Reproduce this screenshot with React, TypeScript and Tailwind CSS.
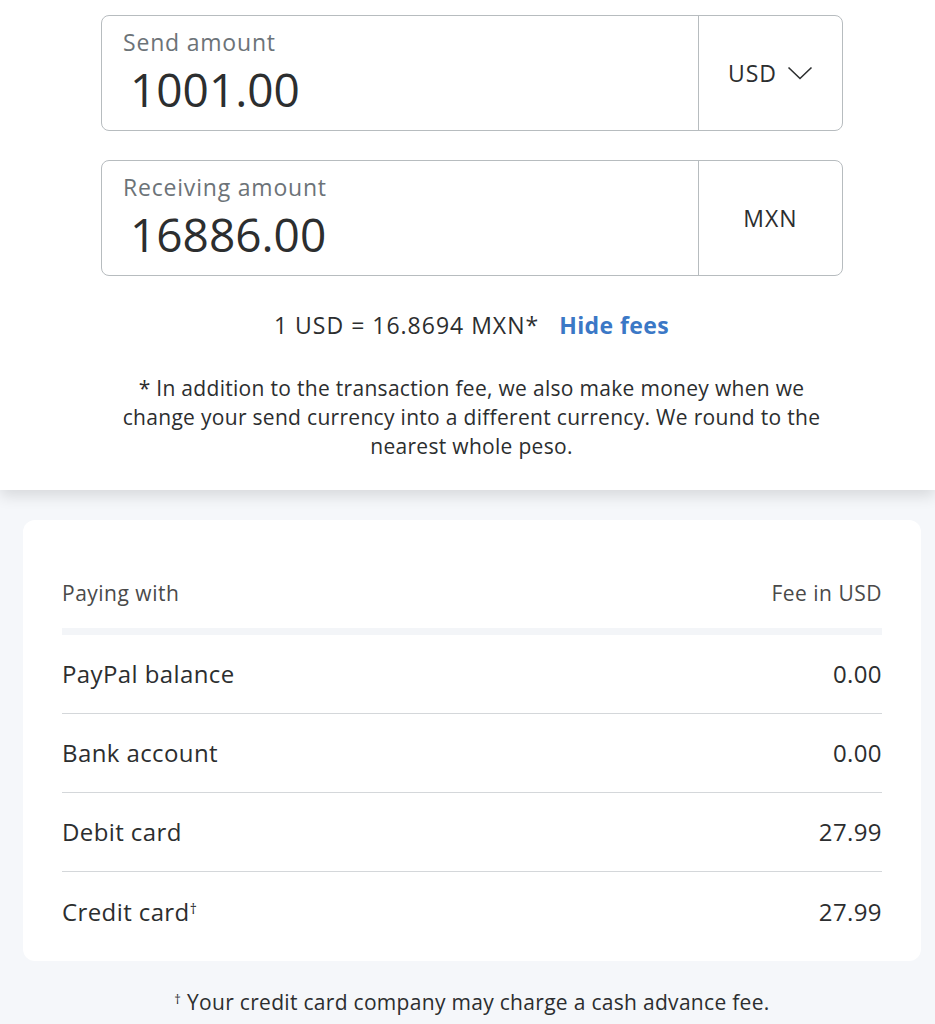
const rows = [
  { label: 'PayPal balance', fee: '0.00' },
  { label: 'Bank account', fee: '0.00' },
  { label: 'Debit card', fee: '27.99' },
  { label: 'Credit card', fee: '27.99', dagger: true },
]

function AmountBox({ label, value, currency, chevron }: { label: string; value: string; currency: string; chevron?: boolean }) {
  return (
    <div className="flex h-[116px] w-[742px] rounded-lg border border-[#b7bcbf] bg-white">
      <div className="flex flex-1 flex-col pl-[21px] pt-[11px]">
        <span className="text-[23px] leading-[31px] tracking-[0.8px] text-[#6c7378]">{label}</span>
        <span className="ml-[7px] text-[46px] leading-[63px] text-[#2c2e2f]">{value}</span>
      </div>
      <div className="flex w-[144px] items-center justify-center gap-[10px] border-l border-[#b7bcbf] text-[23px] tracking-[1px] text-[#2c2e2f]">
        <span>{currency}</span>
        {chevron && (
          <svg width="26" height="14" viewBox="0 0 26 14" fill="none" stroke="#2c2e2f" strokeWidth="1.6">
            <path d="M1.5 1.5l11.5 11 11.5-11" />
          </svg>
        )}
      </div>
    </div>
  )
}

export default function App() {
  return (
    <div className="min-h-screen bg-[#f5f7fa]" style={{ fontFamily: '"Open Sans", "Noto Sans", sans-serif' }}>
      <div className="bg-white pb-[29px] pt-[15px] shadow-[0_6px_14px_rgba(0,0,0,0.12)]">
        <div className="ml-[101px] flex flex-col gap-[29px]">
          <AmountBox label="Send amount" value="1001.00" currency="USD" chevron />
          <AmountBox label="Receiving amount" value="16886.00" currency="MXN" />
        </div>
        <div className="mt-[34px] flex items-center justify-center gap-[20px] pl-[8px] text-[23px] leading-[30px]">
          <span className="tracking-[1px] text-[#2c2e2f]">1 USD = 16.8694 MXN*</span>
          <span className="font-bold tracking-[0.4px] text-[#3b78c6]">Hide fees</span>
        </div>
        <p className="mx-auto mt-[34px] w-[712px] pl-[8px] text-center text-[21px] leading-[29px] tracking-[0.3px] text-[#2c2e2f]">
          * In addition to the transaction fee, we also make money when we change your send currency into a different currency. We round to the nearest whole peso.
        </p>
      </div>

      <div className="pl-[23px] pr-[14px] pt-[30px]">
        <div className="rounded-xl bg-white px-[39px] pb-[10px] pt-[58px]">
          <div className="flex justify-between text-[21px] leading-[30px] tracking-[0.5px] text-[#4a4a4a]">
            <span>Paying with</span>
            <span>Fee in USD</span>
          </div>
          <div className="mt-[20px] h-[7px] bg-[#f3f5f8]" />
          {rows.map((r, i) => (
            <div
              key={r.label}
              className={`flex h-[79px] items-center justify-between text-[24px] tracking-[0.4px] text-[#2c2e2f] ${i < rows.length - 1 ? 'border-b border-[#d4d7da]' : ''}`}
            >
              <span>
                {r.label}
                {r.dagger && <sup className="text-[14px]">†</sup>}
              </span>
              <span>{r.fee}</span>
            </div>
          ))}
        </div>
        <p className="pt-[27px] text-center text-[21px] leading-[29px] tracking-[0.3px] text-[#2c2e2f]">
          <sup className="text-[13px]">†</sup> Your credit card company may charge a cash advance fee.
        </p>
      </div>
    </div>
  )
}
